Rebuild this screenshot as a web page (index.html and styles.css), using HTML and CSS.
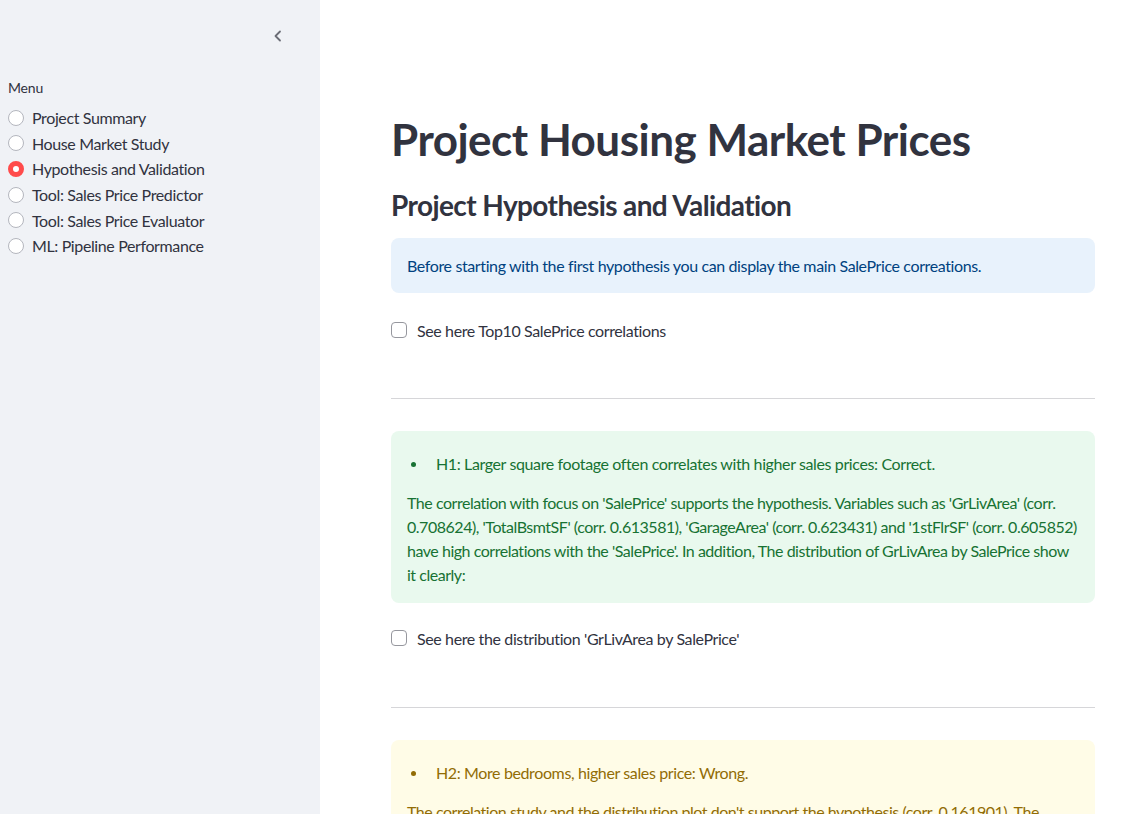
FILE: index.html
```html
<!DOCTYPE html>
<html lang="en">
<head>
<meta charset="utf-8">
<title>Project Housing Market Prices</title>
<link rel="stylesheet" href="styles.css">
</head>
<body>
<div class="app">
  <aside class="sidebar">
    <div class="sidebar-head">
      <button class="collapse" aria-label="Collapse sidebar">
        <svg width="16" height="16" viewBox="0 0 16 16"><path d="M10 3.5 L5.5 8 L10 12.5" fill="none" stroke="#6b6d76" stroke-width="1.8" stroke-linecap="round" stroke-linejoin="round"/></svg>
      </button>
    </div>
    <div class="menu-label">Menu</div>
    <ul class="radio-list">
      <li class="radio"><span class="dot"></span>Project Summary</li>
      <li class="radio"><span class="dot"></span>House Market Study</li>
      <li class="radio selected"><span class="dot"></span>Hypothesis and Validation</li>
      <li class="radio"><span class="dot"></span>Tool: Sales Price Predictor</li>
      <li class="radio"><span class="dot"></span>Tool: Sales Price Evaluator</li>
      <li class="radio"><span class="dot"></span>ML: Pipeline Performance</li>
    </ul>
  </aside>
  <main class="main">
    <div class="block">
      <h1 class="title">Project Housing Market Prices</h1>
      <h2 class="subheader">Project Hypothesis and Validation</h2>
      <div class="alert info">Before starting with the first hypothesis you can display the main SalePrice correations.</div>
      <label class="checkbox"><span class="box"></span>See here Top10 SalePrice correlations</label>
      <hr class="divider">
      <div class="alert success">
        <ul class="bullets"><li>H1: Larger square footage often correlates with higher sales prices: Correct.</li></ul>
        <p>The correlation with focus on 'SalePrice' supports the hypothesis. Variables such as 'GrLivArea' (corr. 0.708624), 'TotalBsmtSF' (corr. 0.613581), 'GarageArea' (corr. 0.623431) and '1stFlrSF' (corr. 0.605852) have high correlations with the 'SalePrice'. In addition, The distribution of GrLivArea by SalePrice show it clearly:</p>
      </div>
      <label class="checkbox cb2"><span class="box"></span>See here the distribution 'GrLivArea by SalePrice'</label>
      <hr class="divider d2">
      <div class="alert warning">
        <ul class="bullets"><li>H2: More bedrooms, higher sales price: Wrong.</li></ul>
        <p>The correlation study and the distribution plot don't support the hypothesis (corr. 0.161901). The number of bedrooms has only a weak correlation with the sale price.</p>
      </div>
    </div>
  </main>
</div>
</body>
</html>
```
FILE: styles.css
```css
* { box-sizing: border-box; }
html, body { margin: 0; padding: 0; height: 100%; overflow: hidden; }
body {
  font-family: "Lato", "Liberation Sans", sans-serif;
  color: rgb(49, 51, 63);
  background: #fff;
  letter-spacing: -0.38px;
}
.app { display: flex; height: 814px; }
.sidebar {
  width: 320px;
  flex: none;
  background: rgb(240, 242, 246);
  padding: 0 8px;
}
.sidebar-head {
  display: flex;
  justify-content: flex-end;
  padding: 28px 26px 0 0;
  height: 72px;
}
.collapse {
  border: 0; background: none; padding: 0;
  width: 16px; height: 16px;
  display: flex; align-items: center; justify-content: center;
}
.menu-label { font-size: 14px; line-height: 20px; height: 20px; margin-top: 6px; letter-spacing: -0.2px; }
.radio-list { list-style: none; margin: 7px 0 0; padding: 0; }
.radio {
  display: flex; align-items: center;
  height: 25.6px;
  font-size: 16px;
}
.dot {
  width: 16px; height: 16px; border-radius: 50%;
  border: 1px solid rgb(180, 182, 190);
  background: #fff;
  margin-right: 8px;
  flex: none;
}
.radio.selected .dot {
  border: 5px solid rgb(255, 75, 75);
  background: #fff;
}
.main { flex: 1; padding-left: 71px; }
.block { width: 704px; }
.title {
  margin: 113px 0 0;
  font-size: 44px; line-height: 52px; font-weight: 700;
  letter-spacing: -0.5px;
}
.subheader {
  margin: 22px 0 0;
  font-size: 28px; line-height: 36px; font-weight: 700;
  letter-spacing: -0.6px;
}
.alert {
  border-radius: 8px;
  padding: 16px 15px 16px 16px;
  font-size: 16px; line-height: 24px;
}
.alert p { margin: 0; letter-spacing: -0.47px; }
.info {
  margin-top: 15px;
  height: 55px;
  background: rgb(232, 242, 252);
  color: rgb(0, 66, 128);
}
.success { margin-top: 0; background: rgb(233, 249, 238); color: rgb(23, 114, 51); padding-top: 21px; }
.warning { background: rgb(255, 252, 231); color: rgb(146, 108, 5); padding-top: 21px; }
.bullets { list-style: none; margin: 0 0 15px; padding: 0 0 0 29px; }
.bullets li { display: flex; align-items: center; }
.bullets li::before {
  content: "";
  width: 5px; height: 5px; border-radius: 50%;
  background: currentColor;
  margin-left: -25.5px; margin-right: 20.5px;
  flex: none;
}
.checkbox {
  display: flex; align-items: center;
  margin-top: 25px; height: 24px;
  font-size: 16px;
}
.box {
  width: 16px; height: 16px; border-radius: 4px;
  border: 1px solid rgb(150, 151, 158);
  background: #fff; margin-right: 10px; flex: none;
}
.divider {
  border: 0; border-top: 1px solid rgb(214, 214, 217);
  margin: 56px 0 32px;
}
.cb2 { margin-top: 23px; }
.d2 { margin-top: 57px; }
```
